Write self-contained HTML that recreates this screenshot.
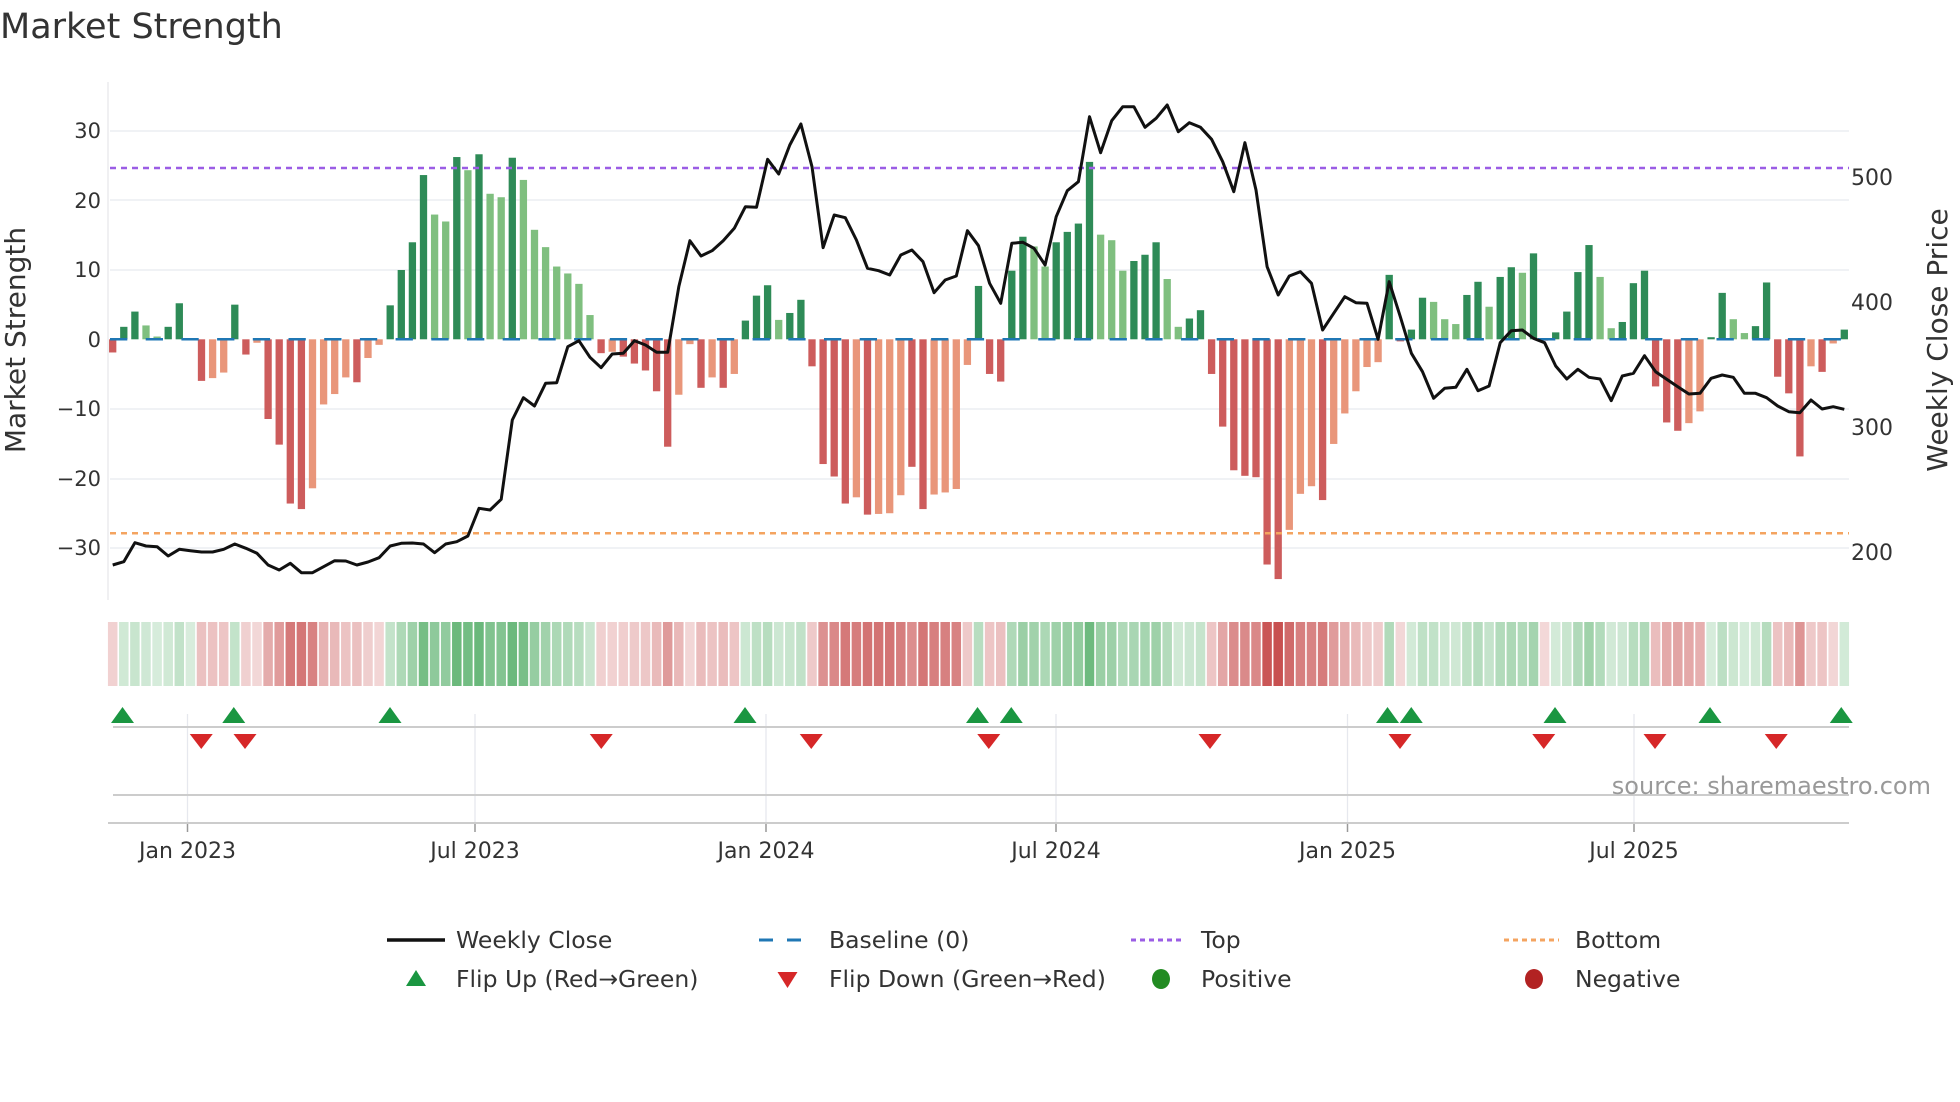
<!DOCTYPE html>
<html><head><meta charset="utf-8">
<style>
html,body{margin:0;padding:0;background:#fff;width:1960px;height:1102px;overflow:hidden}
svg{display:block}
text{font-family:"DejaVu Sans","Liberation Sans",sans-serif;fill:#333}
</style></head>
<body>
<svg id="s" width="1960" height="1102" viewBox="0 0 1960 1102" xmlns="http://www.w3.org/2000/svg">
<rect width="1960" height="1102" fill="#fff"/>
<g id="grid"></g>
<g id="heat"></g>
<g id="bars"></g>
<g id="lines"></g>
<g id="sig"></g>
<text x="0" y="38" font-size="35" fill="#333">Market Strength</text>
<g font-size="21" text-anchor="end">
<text x="101" y="138">30</text>
<text x="101" y="208">20</text>
<text x="101" y="277">10</text>
<text x="101" y="347">0</text>
<text x="101" y="416">−10</text>
<text x="101" y="486">−20</text>
<text x="101" y="555">−30</text>
</g>
<g font-size="22">
<text x="1851" y="185">500</text>
<text x="1851" y="310">400</text>
<text x="1851" y="435">300</text>
<text x="1851" y="560">200</text>
</g>
<text transform="translate(25,340) rotate(-90)" font-size="28" text-anchor="middle">Market Strength</text>
<text transform="translate(1947,340) rotate(-90)" font-size="28" text-anchor="middle">Weekly Close Price</text>
<text x="1931" y="794" font-size="24" text-anchor="end" fill="#999" style="fill:#999">source: sharemaestro.com</text>
<g font-size="22" text-anchor="middle">
<text x="187.5" y="858">Jan 2023</text>
<text x="475" y="858">Jul 2023</text>
<text x="766" y="858">Jan 2024</text>
<text x="1056" y="858">Jul 2024</text>
<text x="1347.5" y="858">Jan 2025</text>
<text x="1634" y="858">Jul 2025</text>
</g>
<g font-size="23.5">
<line x1="387" y1="940" x2="445" y2="940" stroke="#111" stroke-width="3.5"/>
<text x="456" y="948">Weekly Close</text>
<line x1="759" y1="940" x2="815" y2="940" stroke="#1f77b4" stroke-width="3" stroke-dasharray="14,14"/>
<text x="829" y="948">Baseline (0)</text>
<line x1="1131" y1="940" x2="1185" y2="940" stroke="#9b5de5" stroke-width="3" stroke-dasharray="5,4"/>
<text x="1201" y="948">Top</text>
<line x1="1504" y1="940" x2="1559" y2="940" stroke="#f4a460" stroke-width="3" stroke-dasharray="5,4"/>
<text x="1575" y="948">Bottom</text>
<polygon points="416,970 406,986 426,986" fill="#1a9641"/>
<text x="456" y="987">Flip Up (Red→Green)</text>
<polygon points="777.5,972 797.5,972 787.5,988" fill="#d62728"/>
<text x="829" y="987">Flip Down (Green→Red)</text>
<ellipse cx="1161" cy="979" rx="9" ry="10" fill="#228b22"/>
<text x="1201" y="987">Positive</text>
<ellipse cx="1534" cy="979" rx="9" ry="10" fill="#b22222"/>
<text x="1575" y="987">Negative</text>
</g>
</svg>
<script>
var NS="http://www.w3.org/2000/svg";
function el(p,t,a){var e=document.createElementNS(NS,t);for(var k in a)e.setAttribute(k,a[k]);document.getElementById(p).appendChild(e);return e;}
var V=[[-1.9,1],[1.8,1],[4,1],[2,0],[0.4,0],[1.8,1],[5.2,1],[0,1],[-6,1],[-5.6,0],[-4.8,0],[5,1],[-2.2,1],[-0.5,0],[-11.5,1],[-15.2,1],[-23.7,1],[-24.5,1],[-21.5,0],[-9.4,0],[-7.9,0],[-5.5,0],[-6.2,1],[-2.7,0],[-0.8,0],[4.9,1],[10,1],[14,1],[23.7,1],[18,0],[17,0],[26.3,1],[24.4,0],[26.7,1],[21,0],[20.5,0],[26.2,1],[23,0],[15.8,0],[13.3,0],[10.5,0],[9.5,0],[8,0],[3.5,0],[-2,1],[-1.8,0],[-2.5,1],[-3.5,1],[-4.5,1],[-7.5,1],[-15.5,1],[-8,0],[-0.7,0],[-7,1],[-5.5,0],[-7,1],[-5,0],[2.7,1],[6.3,1],[7.8,1],[2.8,0],[3.8,1],[5.7,1],[-3.9,1],[-18,1],[-19.8,1],[-23.7,1],[-22.8,0],[-25.3,1],[-25.2,0],[-25.1,0],[-22.5,0],[-18.4,1],[-24.5,1],[-22.4,0],[-22.1,0],[-21.6,0],[-3.7,0],[7.7,1],[-5,1],[-6.1,1],[9.9,1],[14.8,1],[13.4,0],[10.5,0],[14,1],[15.5,1],[16.7,1],[25.6,1],[15.1,0],[14.3,0],[9.9,0],[11.3,1],[12.2,1],[14,1],[8.7,0],[1.8,0],[3,1],[4.2,1],[-5,1],[-12.6,1],[-18.9,1],[-19.7,1],[-19.9,1],[-32.5,1],[-34.6,1],[-27.5,0],[-22.3,0],[-21.2,0],[-23.2,1],[-15.1,0],[-10.7,0],[-7.5,0],[-4,0],[-3.3,0],[9.3,1],[-0.3,1],[1.4,1],[6,1],[5.4,0],[2.9,0],[2.2,0],[6.4,1],[8.3,1],[4.7,0],[9,1],[10.4,1],[9.6,0],[12.4,1],[-0.2,1],[1,1],[4,1],[9.7,1],[13.6,1],[9,0],[1.6,0],[2.5,1],[8.1,1],[9.9,1],[-6.8,1],[-12,1],[-13.2,1],[-12.1,0],[-10.4,0],[0.3,1],[6.7,1],[2.9,0],[0.9,0],[1.9,1],[8.2,1],[-5.4,1],[-7.8,1],[-16.9,1],[-3.9,0],[-4.7,1],[-0.6,0],[1.4,1]];
var P=[1395,1385,1328,1338,1340,1368,1348,1352,1356,1356,1348,1332,1345,1360,1395,1410,1390,1418,1418,1400,1382,1383,1395,1386,1373,1338,1330,1329,1332,1358,1332,1325,1308,1225,1230,1198,960,893,918,850,848,740,722,772,803,762,760,722,735,757,757,560,422,468,452,422,385,320,322,178,222,135,72,200,443,345,353,420,505,512,525,465,450,485,578,540,528,392,437,550,610,430,427,445,495,350,272,245,50,158,62,20,20,82,55,15,95,68,82,118,185,275,128,270,500,585,528,515,550,690,640,590,608,610,718,545,650,760,815,895,865,862,808,872,858,728,692,690,715,728,798,837,808,832,837,902,828,820,767,815,838,860,882,880,835,825,832,880,880,893,918,935,938,900,927,920,928];
var Z=339.3,U=6.93,X0=112.7,DX=11.1,BW=7.3,XE=1849;
[131,200,270,409,479,548].forEach(function(y){el("grid","line",{x1:110,x2:XE,y1:y,y2:y,stroke:"#eceef2","stroke-width":1.5});});
el("grid","line",{x1:108,x2:108,y1:82,y2:600,stroke:"#e8e8ec","stroke-width":1.3});
[187.5,475,766,1056,1347.5,1634].forEach(function(x){
 el("grid","line",{x1:x,x2:x,y1:714,y2:823,stroke:"#e6e8ee","stroke-width":1.3});
 el("grid","line",{x1:x,x2:x,y1:823,y2:832,stroke:"#999","stroke-width":1.5});
});
el("grid","line",{x1:113,x2:XE,y1:727,y2:727,stroke:"#ccc","stroke-width":2});
el("grid","line",{x1:113,x2:XE,y1:795,y2:795,stroke:"#ccc","stroke-width":2});
el("grid","line",{x1:108,x2:XE,y1:823,y2:823,stroke:"#ccc","stroke-width":2});
V.forEach(function(d,i){
 var v=d[0],x=X0+DX*i;
 var a=Math.min(0.22+0.78*Math.abs(v)/34,1);
 var c=v>=0?"rgba(76,170,96,"+a+")":"rgba(200,80,80,"+a+")";
 el("heat","rect",{x:x-DX/2+0.8,y:622,width:DX-1.6,height:64,fill:c});
 if(v!==0){
  var h=Math.abs(v)*U,y=v>0?Z-h:Z;
  var col=v>0?(d[1]?"#2e8b57":"#7fbf7f"):(d[1]?"#cd5c5c":"#e9967a");
  el("bars","rect",{x:x-BW/2,y:y,width:BW,height:Math.max(h,1),fill:col});
 }
});
el("lines","line",{x1:110,x2:XE,y1:Z,y2:Z,stroke:"#1f77b4","stroke-width":2.5,"stroke-dasharray":"17.3,18.4"});
el("lines","line",{x1:110,x2:XE,y1:168,y2:168,stroke:"#9b5de5","stroke-width":2.5,"stroke-dasharray":"6,5"});
el("lines","line",{x1:110,x2:XE,y1:533.3,y2:533.3,stroke:"#f4a460","stroke-width":2.5,"stroke-dasharray":"6,5"});
var pts=P.map(function(y,i){return (X0+DX*i).toFixed(1)+","+(100+y/3).toFixed(1);}).join(" ");
el("lines","polyline",{points:pts,fill:"none",stroke:"#111","stroke-width":3,"stroke-linejoin":"round"});
var S=1.25;
[98,187,312,596,782,809,1110,1129,1244,1368,1473].forEach(function(dx){var x=dx*S;
 el("sig","polygon",{points:(x)+",707 "+(x-11.5)+",723 "+(x+11.5)+",723",fill:"#1a9641"});});
[161,196,481,649,791,968,1120,1235,1324,1421].forEach(function(dx){var x=dx*S;
 el("sig","polygon",{points:(x-11.5)+",734 "+(x+11.5)+",734 "+x+",749",fill:"#d62728"});});
</script>
</body></html>
